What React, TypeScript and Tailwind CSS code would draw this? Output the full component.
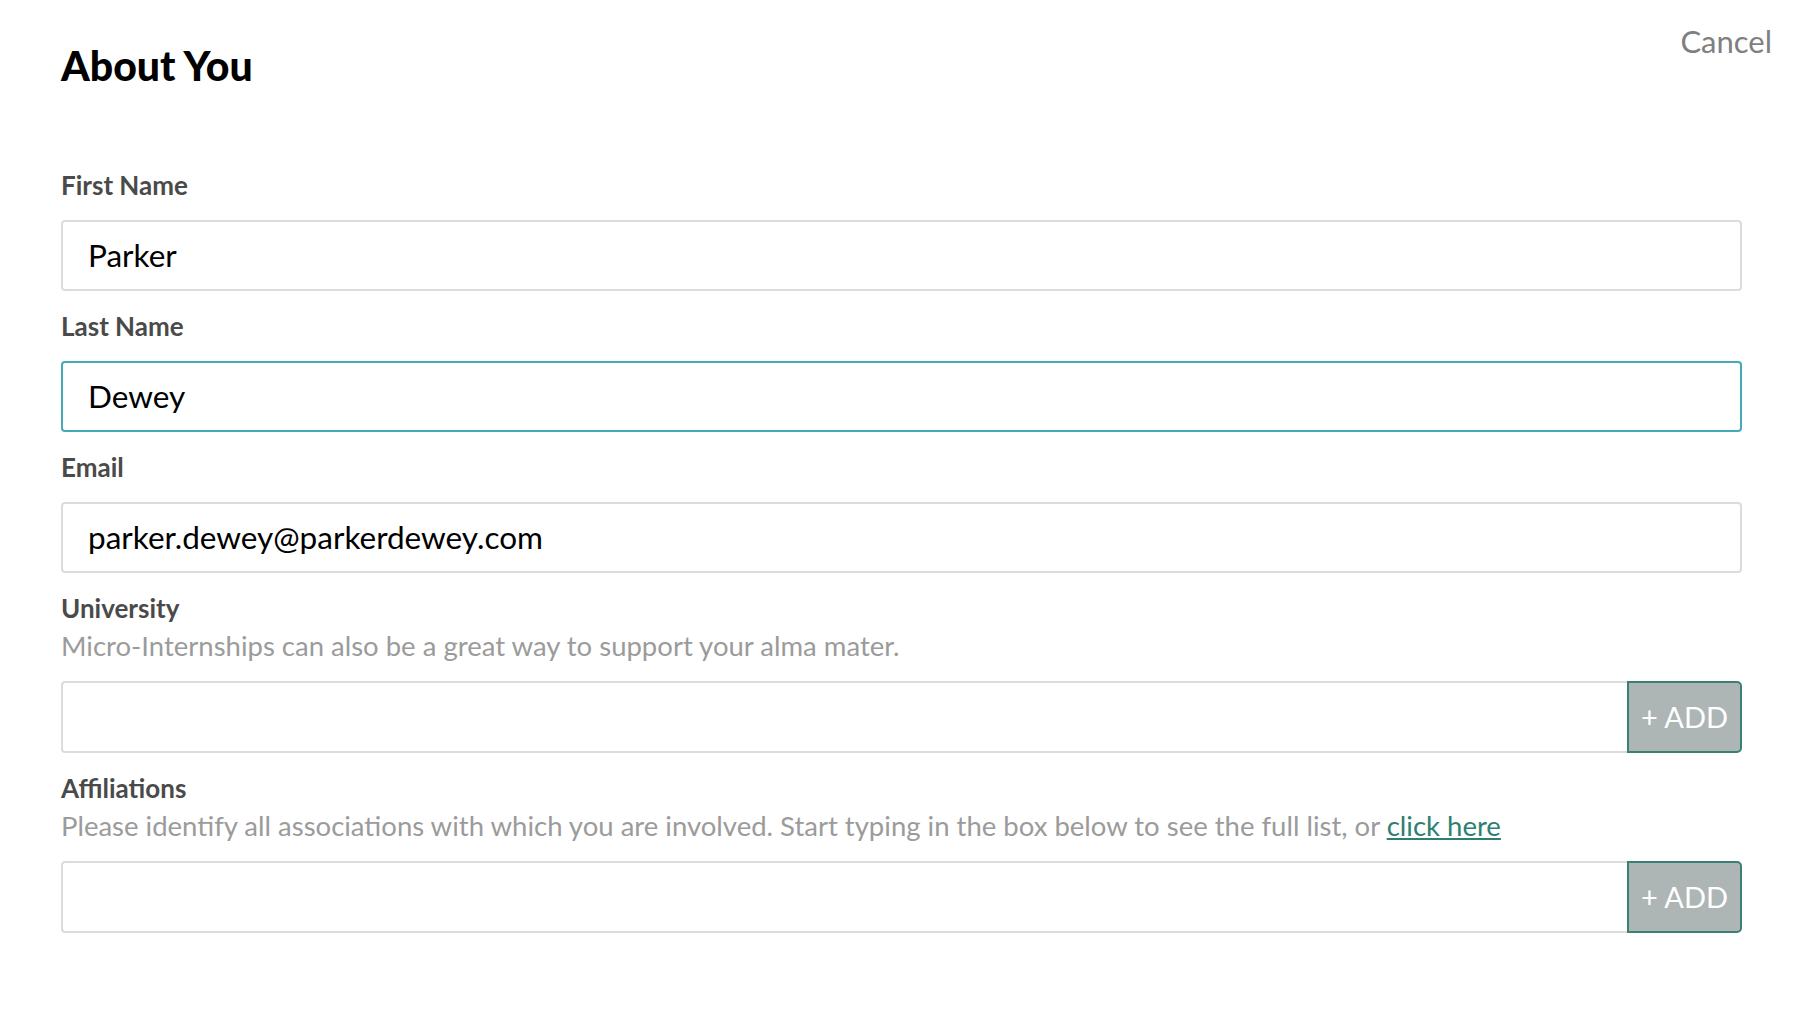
import React from 'react';

const Field = ({ label, value, focused }: { label: string; value: string; focused?: boolean }) => (
  <div>
    <div className="text-[26px] font-bold text-[#4a4a4a] leading-[30px] mb-[20px]">{label}</div>
    <div
      className={`h-[71px] rounded-[4px] border-2 flex items-center px-[25px] text-[31.5px] text-black ${
        focused ? 'border-[#45aab8]' : 'border-[#dcdcdc]'
      }`}
    >
      {value}
    </div>
  </div>
);

const AddField = ({ label, help }: { label: string; help: React.ReactNode }) => (
  <div>
    <div className="text-[26px] font-bold text-[#4a4a4a] leading-[30px]">{label}</div>
    <div className="text-[27.5px] text-[#9b9b9b] leading-[34px] mt-[6px] mb-[18px]">{help}</div>
    <div className="flex h-[72px]">
      <div className="flex-1 border-2 border-r-0 border-[#dcdcdc] rounded-l-[4px]" />
      <button className="w-[115px] bg-[#adb5b5] border-2 border-[#3b8075] rounded-r-[5px] text-white text-[29px]">
        + ADD
      </button>
    </div>
  </div>
);

export default function App() {
  return (
    <div className="relative bg-white w-[1802px] h-[1016px] px-[61px] pt-[42px]" style={{ fontFamily: 'Lato, "Open Sans", sans-serif' }}>
      <div className="absolute right-[30px] top-[18px] text-[31px] text-[#7f7f7f]">Cancel</div>
      <h1 className="text-[41px] font-black text-black leading-[48px]">About You</h1>
      <div className="mt-[80px] flex flex-col gap-[20px] w-[1681px]">
        <Field label="First Name" value="Parker" />
        <Field label="Last Name" value="Dewey" focused />
        <Field label="Email" value="parker.dewey@parkerdewey.com" />
        <AddField label="University" help="Micro-Internships can also be a great way to support your alma mater." />
        <AddField
          label="Affiliations"
          help={
            <>
              Please identify all associations with which you are involved. Start typing in the box below to see the full list, or{' '}
              <a className="text-[#2f7f71] underline">click here</a>
            </>
          }
        />
      </div>
    </div>
  );
}
